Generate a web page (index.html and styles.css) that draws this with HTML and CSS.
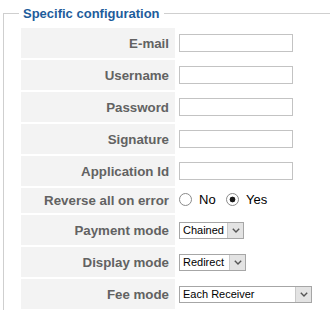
FILE: index.html
```html
<!DOCTYPE html>
<html lang="en">
<head>
    <meta charset="UTF-8">
    <title>Specific configuration</title>
    <link rel="stylesheet" href="styles.css">
</head>
<body>
    <fieldset class="config-box">
        <legend>Specific configuration</legend>
        <table class="config-table">
            <tr>
                <td class="key">E-mail</td>
                <td class="val"><input type="text" class="text-field"></td>
            </tr>
            <tr>
                <td class="key">Username</td>
                <td class="val"><input type="text" class="text-field"></td>
            </tr>
            <tr>
                <td class="key">Password</td>
                <td class="val"><input type="text" class="text-field"></td>
            </tr>
            <tr>
                <td class="key">Signature</td>
                <td class="val"><input type="text" class="text-field"></td>
            </tr>
            <tr>
                <td class="key">Application Id</td>
                <td class="val"><input type="text" class="text-field"></td>
            </tr>
            <tr class="short-row">
                <td class="key">Reverse all on error</td>
                <td class="val">
                    <label class="radio-opt"><input type="radio" name="reverse"> No</label>
                    <label class="radio-opt"><input type="radio" name="reverse" checked> Yes</label>
                </td>
            </tr>
            <tr>
                <td class="key">Payment mode</td>
                <td class="val">
                    <span class="dropdown w-chained">
                        <select><option>Chained</option></select>
                        <span class="drop-btn"><svg width="8" height="5" viewBox="0 0 8 5"><polyline points="0.8,0.8 4,4 7.2,0.8" fill="none" stroke="#555" stroke-width="1.4"/></svg></span>
                    </span>
                </td>
            </tr>
            <tr>
                <td class="key">Display mode</td>
                <td class="val">
                    <span class="dropdown w-redirect">
                        <select><option>Redirect</option></select>
                        <span class="drop-btn"><svg width="8" height="5" viewBox="0 0 8 5"><polyline points="0.8,0.8 4,4 7.2,0.8" fill="none" stroke="#555" stroke-width="1.4"/></svg></span>
                    </span>
                </td>
            </tr>
            <tr>
                <td class="key">Fee mode</td>
                <td class="val">
                    <span class="dropdown w-fee">
                        <select><option>Each Receiver</option></select>
                        <span class="drop-btn"><svg width="8" height="5" viewBox="0 0 8 5"><polyline points="0.8,0.8 4,4 7.2,0.8" fill="none" stroke="#555" stroke-width="1.4"/></svg></span>
                    </span>
                </td>
            </tr>
        </table>
    </fieldset>
</body>
</html>
```

FILE: styles.css
```css
html, body {
    overflow: hidden;
}

body {
    margin: 0;
    background: #fff;
    font-family: "Liberation Sans", Arial, sans-serif;
}

.config-box {
    width: 400px;
    margin: 6px 0 0 3px;
    padding: 5px 0 40px 15px;
    border: 1px solid #cfcfcf;
}

.config-box legend {
    padding: 0 4px;
    font-size: 13px;
    line-height: 15px;
    font-weight: bold;
    color: #1d5c9b;
}

.config-table {
    border-spacing: 2px;
}

.key {
    width: 148px;
    height: 30px;
    padding: 0 6px 0 0;
    background-color: #f3f3f3;
    text-align: right;
    font-size: 13.3px;
    font-weight: bold;
    color: #626262;
    white-space: nowrap;
}

.short-row .key {
    height: 25px;
}

.val {
    padding: 0 0 0 2px;
    vertical-align: middle;
}

.text-field {
    display: block;
    box-sizing: border-box;
    width: 114px;
    height: 18px;
    margin: 0;
    border: 1px solid #c3c3c3;
}

.radio-opt {
    display: inline-flex;
    align-items: center;
    font-size: 13px;
    color: #000;
    margin-right: 6px;
}

.radio-opt input {
    appearance: none;
    -webkit-appearance: none;
    box-sizing: border-box;
    width: 13px;
    height: 13px;
    margin: 0 7px 0 0;
    border: 1px solid #8a8a8a;
    border-radius: 50%;
    background: #fff;
}

.radio-opt input:checked {
    background: radial-gradient(circle, #1a1a1a 0 2.6px, #fff 3.2px);
}

.dropdown {
    display: flex;
    box-sizing: border-box;
    height: 17px;
    border: 1px solid #a6a6a6;
    background: #fff;
}

.w-chained { width: 65px; }
.w-redirect { width: 67px; }
.w-fee { width: 133px; }

.dropdown select {
    appearance: none;
    -webkit-appearance: none;
    flex: 1;
    min-width: 0;
    height: 15px;
    margin: 0;
    padding: 0 0 0 3px;
    border: none;
    background: transparent;
    font-family: "Liberation Sans", Arial, sans-serif;
    font-size: 11px;
    line-height: 15px;
    color: #000;
}

.drop-btn {
    display: flex;
    align-items: center;
    justify-content: center;
    box-sizing: border-box;
    width: 16px;
    height: 15px;
    background: #e3e3e3;
    border-left: 1px solid #c9c9c9;
}
```
